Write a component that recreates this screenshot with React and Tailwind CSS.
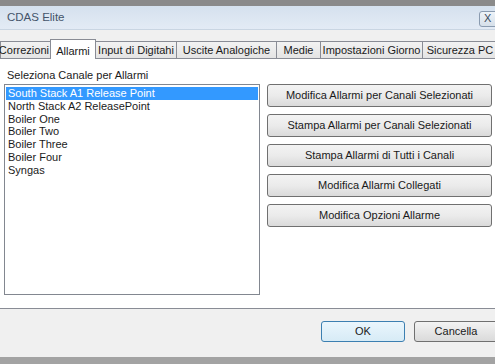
import React from "react";

const tabs = [
  { label: "Correzioni", w: "w-[51px]" },
  { label: "Allarmi", w: "w-[46px]", active: true },
  { label: "Input di Digitahi", w: "w-[82px]" },
  { label: "Uscite Analogiche", w: "w-[101px]" },
  { label: "Medie", w: "w-[45px]" },
  { label: "Impostazioni Giorno", w: "w-[103px]" },
  { label: "Sicurezza PC", w: "w-[76px]" },
];

const channels = [
  "South Stack A1 Release Point",
  "North Stack A2 ReleasePoint",
  "Boiler One",
  "Boiler Two",
  "Boiler Three",
  "Boiler Four",
  "Syngas",
];

const actions = [
  "Modifica Allarmi per Canali Selezionati",
  "Stampa Allarmi per Canali Selezionati",
  "Stampa Allarmi di Tutti i Canali",
  "Modifica Allarmi Collegati",
  "Modifica Opzioni Allarme",
];

const App = () => {
  return (
    <div className="w-[495px] h-[364px] overflow-hidden flex flex-col bg-[#f0f0f0] text-[11px] text-[#1a1a1a] font-['Liberation_Sans',Arial,sans-serif]">
      <div className="h-[6px] bg-[#8a8a8a]" />

      {/* title bar */}
      <div className="h-[24px] flex items-center pl-[7px] bg-gradient-to-b from-[#d5e1ee] to-[#e3ebf5] border-b border-[#c9d5e2]">
        <span className="text-[#44546a] text-[11.5px]">CDAS Elite</span>
        <div className="ml-auto mr-[-14px] w-[30px] h-[16px] mt-[2px] rounded-[3px] border border-[#8a9bb0] bg-gradient-to-b from-[#eef3f8] to-[#d6e0ea] flex items-center pl-[4px] text-[11px] text-[#3a4a5c] leading-none">
          X
        </div>
      </div>

      <div className="h-[8px]" />

      {/* tabs */}
      <div className="h-[20px] flex items-end whitespace-nowrap">
        {tabs.map((t, i) =>
          t.active ? (
            <div
              key={t.label}
              className={`${t.w} h-[20px] shrink-0 bg-white border border-b-0 border-[#898c95] flex items-start justify-center pt-[3px] relative z-10 mb-[-1px] -ml-px`}
            >
              {t.label}
            </div>
          ) : (
            <div
              key={t.label}
              className={`${t.w} h-[17px] shrink-0 border border-b-0 border-[#898c95] bg-gradient-to-b from-[#f2f2f2] to-[#e4e4e4] flex items-center ${
                i === 0 ? "justify-end pr-[1px]" : "justify-center -ml-px"
              }`}
            >
              {t.label}
            </div>
          )
        )}
      </div>

      {/* tab panel */}
      <div className="h-[251px] bg-white border-t border-b border-[#898c95] flex gap-[7px] pl-[4px] pt-[9px]">
        <div className="flex flex-col">
          <div className="pl-[3px] leading-[15px] mb-[1px]">Seleziona Canale per Allarmi</div>
          <div className="w-[256px] h-[211px] border border-[#828790] px-[1px] pt-[2px]">
            {channels.map((c, i) => (
              <div
                key={c}
                className={`h-[12.8px] leading-[13px] pl-[2px] whitespace-nowrap ${
                  i === 0 ? "bg-[#3399ff] text-white" : ""
                }`}
              >
                {c}
              </div>
            ))}
          </div>
        </div>

        <div className="flex flex-col gap-[7px] pt-[16px]">
          {actions.map((a) => (
            <div
              key={a}
              className="w-[225px] h-[23px] rounded-[3px] border border-[#707070] bg-gradient-to-b from-[#f3f3f3] via-[#ebebeb] to-[#dadada] flex items-center justify-center"
            >
              {a}
            </div>
          ))}
        </div>
      </div>

      {/* footer */}
      <div className="flex-1 flex items-start pt-[12px] pl-[321px] gap-[9px]">
        <div className="w-[84px] h-[21px] shrink-0 rounded-[3px] border border-[#3c7fb1] bg-gradient-to-b from-[#eaf6fd] to-[#d7ebf6] flex items-center justify-center">
          OK
        </div>
        <div className="w-[84px] h-[21px] shrink-0 rounded-[3px] border border-[#707070] bg-gradient-to-b from-[#f3f3f3] to-[#dadada] flex items-center justify-center">
          Cancella
        </div>
      </div>

      <div className="h-[7px] bg-[#a3a3a3]" />
    </div>
  );
};

export default App;
